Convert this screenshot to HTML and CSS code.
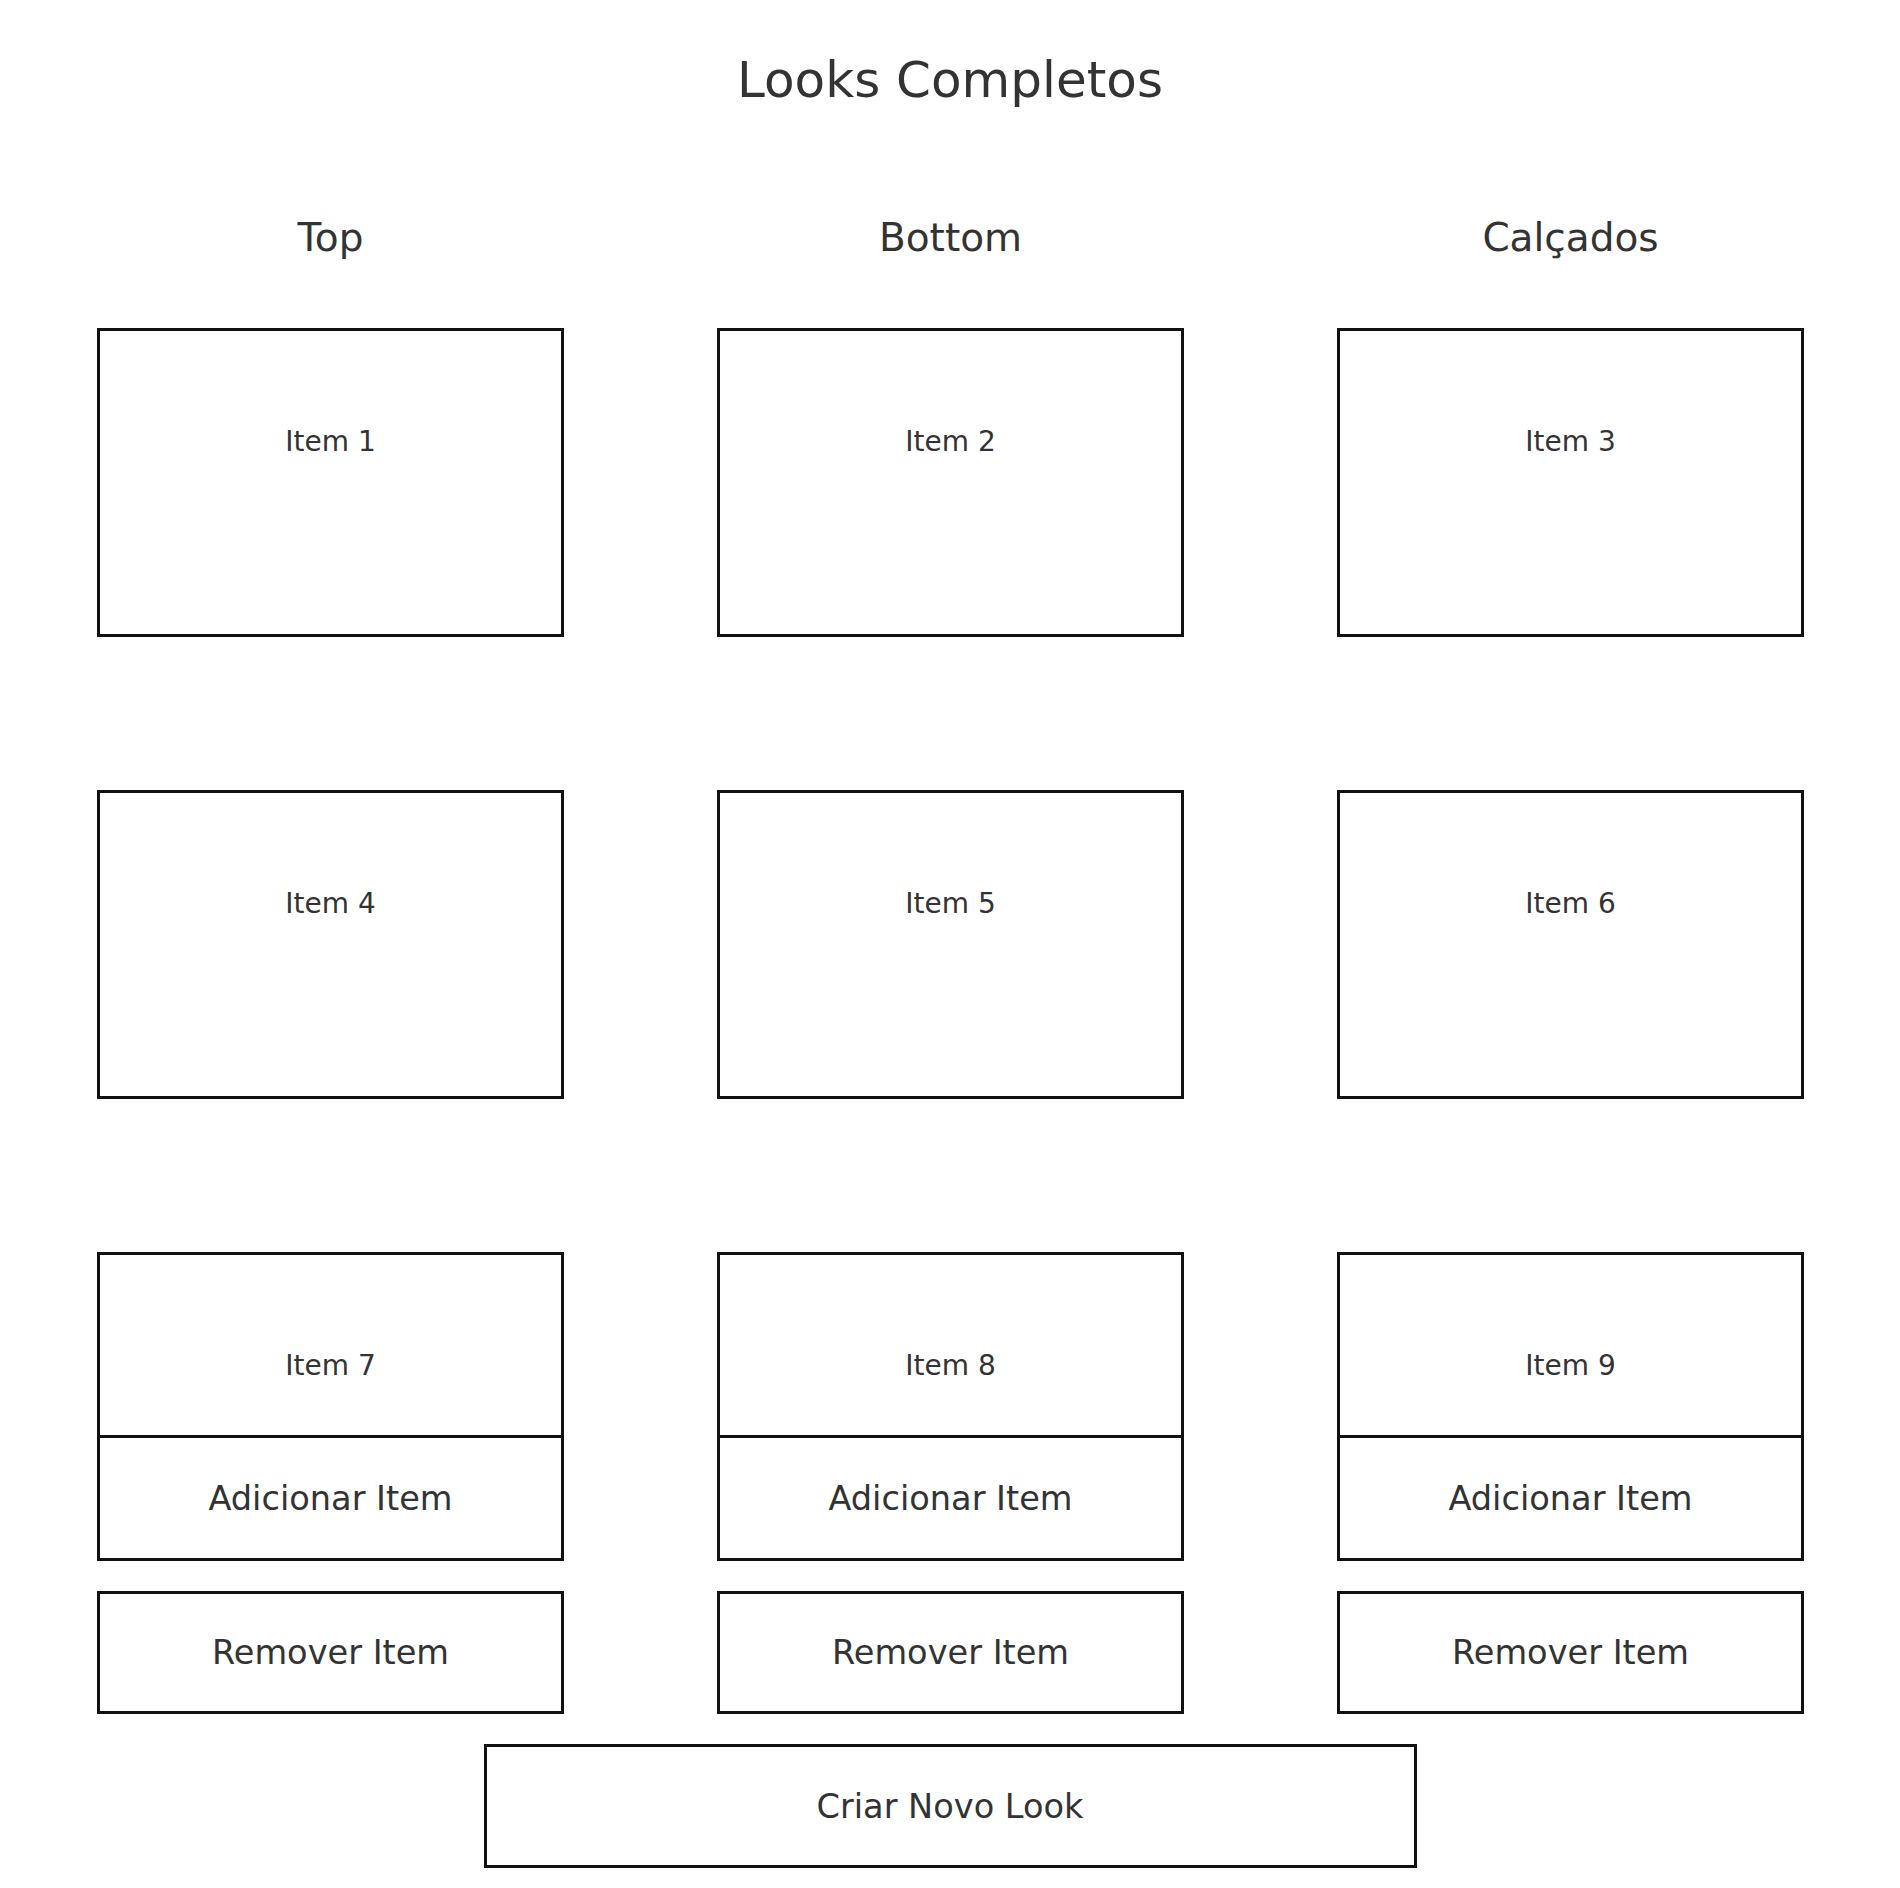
FILE: index.html
```html
<!DOCTYPE html>
<html>
  <head>
    <meta name="viewport" content="width=device-width,initial-scale=1.0">
    <title>Looks Completos</title>
    <link rel="stylesheet" href="styles.css">
  </head>

  <body>
    <h1 class="page-title">Looks Completos</h1>

    <!-- Column headers -->
    <div class="columns headers">
      <h2>Top</h2>
      <h2>Bottom</h2>
      <h2>Calçados</h2>
    </div>

    <!-- Item grid -->
    <div class="columns items">
      <div class="item"><span class="item-label">Item 1</span></div>
      <div class="item"><span class="item-label">Item 2</span></div>
      <div class="item"><span class="item-label">Item 3</span></div>

      <div class="item"><span class="item-label">Item 4</span></div>
      <div class="item"><span class="item-label">Item 5</span></div>
      <div class="item"><span class="item-label">Item 6</span></div>

      <div class="slot">
        <div class="item with-action">
          <span class="item-label">Item 7</span>
          <button class="add-btn">Adicionar Item</button>
        </div>
        <button class="remove-btn">Remover Item</button>
      </div>
      <div class="slot">
        <div class="item with-action">
          <span class="item-label">Item 8</span>
          <button class="add-btn">Adicionar Item</button>
        </div>
        <button class="remove-btn">Remover Item</button>
      </div>
      <div class="slot">
        <div class="item with-action">
          <span class="item-label">Item 9</span>
          <button class="add-btn">Adicionar Item</button>
        </div>
        <button class="remove-btn">Remover Item</button>
      </div>
    </div>

    <button class="create-btn">Criar Novo Look</button>
  </body>
</html>
```

FILE: styles.css
```css
body {
  margin: 0;
  background: #fff;
  color: #333;
  font-family: "DejaVu Sans", Verdana, sans-serif;
}

.page-title {
  margin: 51px 0 0;
  font-size: 50px;
  line-height: 58px;
  font-weight: normal;
  text-align: center;
}

/* Three column layout shared by headers and items */
.columns {
  display: grid;
  grid-template-columns: repeat(3, 467px);
  column-gap: 153px;
  padding: 0 97px;
}

.headers {
  margin-top: 106px;
}
.headers h2 {
  margin: 0;
  font-size: 39px;
  line-height: 46px;
  font-weight: normal;
  text-align: center;
}

.items {
  margin-top: 67px;
  row-gap: 153px;
}

.item {
  height: 309px;
  box-sizing: border-box;
  border: 3px solid #111;
  padding-top: 94px;
  text-align: center;
}
.item-label {
  display: block;
  font-size: 28px;
  line-height: 33px;
}

/* Last row: item box with its action buttons */
.item.with-action {
  display: flex;
  flex-direction: column;
  padding-top: 0;
}
.item.with-action .item-label {
  flex: 1;
  padding-top: 94px;
}

button {
  font-family: inherit;
  color: #333;
  background: #fff;
  cursor: pointer;
  display: flex;
  align-items: center;
  justify-content: center;
  box-sizing: border-box;
  padding: 0;
  font-size: 33.6px;
}

.add-btn {
  height: 123px;
  border: none;
  border-top: 3px solid #111;
}

.remove-btn {
  width: 100%;
  height: 123px;
  margin-top: 30px;
  border: 3px solid #111;
}

.create-btn {
  width: 933px;
  height: 124px;
  margin: 30px auto 0;
  border: 3px solid #111;
}
```
